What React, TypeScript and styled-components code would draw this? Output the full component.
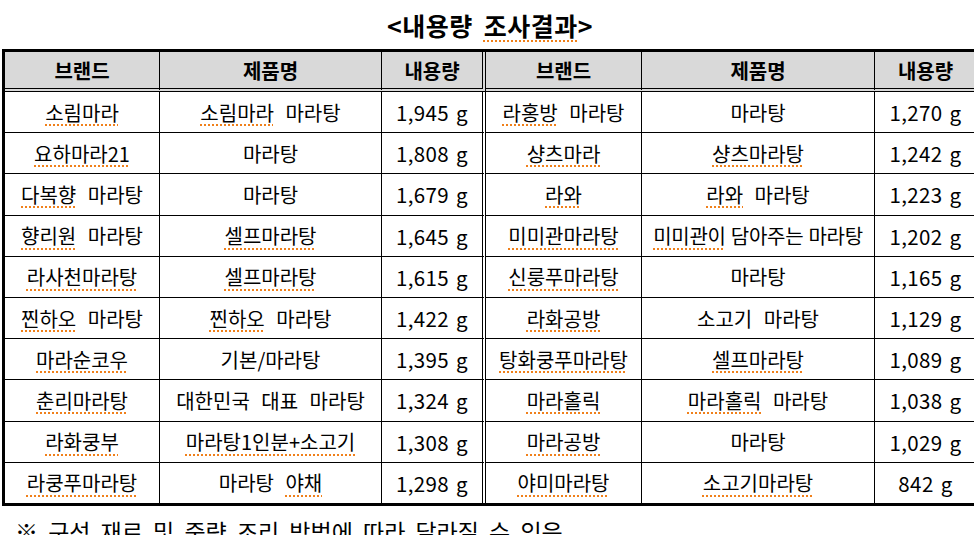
import React from 'react';
import styled, { createGlobalStyle } from 'styled-components';

const Global = createGlobalStyle`
  html, body { margin: 0; padding: 0; background: #fff; overflow: hidden; }
  body { font-family: "Noto Sans CJK KR", "Noto Sans", sans-serif; color: #000; }
`;

const Page = styled.div`
  width: 980px;
  height: 535px;
  overflow: hidden;
  padding-left: 2px;
  box-sizing: border-box;
`;

const Title = styled.h1`
  margin: 0;
  width: 976px;
  height: 49px;
  padding-top: 3px;
  box-sizing: border-box;
  text-align: center;
  font-size: 25px;
  line-height: 44px;
  font-weight: 700;
  letter-spacing: 0.5px;
  word-spacing: 5px;
  white-space: pre;
`;

const Table = styled.table`
  border-collapse: separate;
  border-spacing: 0;
  table-layout: fixed;
  width: 977px;
  border-top: 3px solid #000;
  border-bottom: 3px solid #000;
  border-left: 3px solid #000;
  border-right: 3px solid #000;
`;

const Th = styled.th<{ $split?: boolean }>`
  box-sizing: border-box;
  height: 40px;
  padding: 0;
  background: #d9d9d9;
  font-size: 20px;
  font-weight: 700;
  text-align: center;
  vertical-align: middle;
  border-bottom: 4px double #000;
  border-right: ${(p) => (p.$split ? '4px double #000' : '1px solid #000')};
  &:last-child { border-right: none; }
`;

const Td = styled.td<{ $split?: boolean; $last?: boolean; $tight?: boolean; $num?: boolean }>`
  box-sizing: border-box;
  height: ${(p) => (p.$last ? '40.2px' : '41.2px')};
  padding: 0;
  font-size: ${(p) => (p.$num ? '20.5px' : '20px')};
  font-weight: 400;
  text-align: center;
  vertical-align: middle;
  white-space: nowrap;
  word-spacing: ${(p) => (p.$num ? '2px' : p.$tight ? '1px' : '7px')};
  letter-spacing: ${(p) => (p.$num ? '0.4px' : p.$tight ? '-0.3px' : '0')};
  border-bottom: ${(p) => (p.$last ? 'none' : '1px solid #000')};
  border-right: ${(p) => (p.$split ? '4px double #000' : '1px solid #000')};
  &:last-child { border-right: none; }
`;

const Marked = styled.span`
  text-decoration-line: underline;
  text-decoration-style: dotted;
  text-decoration-color: #f0801a;
  text-decoration-thickness: 2px;
  text-underline-offset: 4px;
`;

const Note = styled.p`
  margin: 9px 0 0;
  padding-left: 13px;
  font-size: 23px;
  line-height: 32px;
  word-spacing: 5px;
  white-space: nowrap;
`;

const widths = [155, 222, 104, 156, 233, 101];
const headers = ['브랜드', '제품명', '내용량', '브랜드', '제품명', '내용량'];

const rows: string[][] = [
  ['~소림마라~', '~소림마라~ 마라탕', '1,945 g', '~라홍방~ 마라탕', '마라탕', '1,270 g'],
  ['~요하마라21~', '마라탕', '1,808 g', '~샹츠마라~', '~샹츠마라탕~', '1,242 g'],
  ['~다복향~ 마라탕', '마라탕', '1,679 g', '~라와~', '~라와~ 마라탕', '1,223 g'],
  ['~향리원~ 마라탕', '~셀프마라탕~', '1,645 g', '~미미관마라탕~', '~미미관이~ 담아주는 마라탕', '1,202 g'],
  ['~라사천마라탕~', '~셀프마라탕~', '1,615 g', '~신룽푸마라탕~', '마라탕', '1,165 g'],
  ['~찐하오~ 마라탕', '~찐하오~ 마라탕', '1,422 g', '~라화공방~', '소고기 마라탕', '1,129 g'],
  ['~마라순코우~', '기본/마라탕', '1,395 g', '~탕화쿵푸마라탕~', '~셀프마라탕~', '1,089 g'],
  ['~춘리마라탕~', '대한민국 대표 마라탕', '1,324 g', '~마라홀릭~', '~마라홀릭~ 마라탕', '1,038 g'],
  ['~라화쿵부~', '~마라탕1인분+소고기~', '1,308 g', '~마라공방~', '마라탕', '1,029 g'],
  ['~라쿵푸마라탕~', '마라탕 ~야채~', '1,298 g', '~야미마라탕~', '~소고기마라탕~', '842 g'],
];

function renderMarked(text: string) {
  return text.split('~').map((seg, i) =>
    i % 2 === 1 ? <Marked key={i}>{seg}</Marked> : <React.Fragment key={i}>{seg}</React.Fragment>
  );
}

export default function App() {
  return (
    <Page>
      <Global />
      <Title>{renderMarked('<내용량 ~조사결과~>')}</Title>
      <Table>
        <colgroup>
          {widths.map((w, i) => (
            <col key={i} style={{ width: w }} />
          ))}
        </colgroup>
        <thead>
          <tr>
            {headers.map((h, i) => (
              <Th key={i} $split={i === 2}>
                {h}
              </Th>
            ))}
          </tr>
        </thead>
        <tbody>
          {rows.map((r, ri) => (
            <tr key={ri}>
              {r.map((c, ci) => (
                <Td
                  key={ci}
                  $split={ci === 2}
                  $last={ri === rows.length - 1}
                  $tight={c.length > 14}
                  $num={ci === 2 || ci === 5}
                >
                  {renderMarked(c)}
                </Td>
              ))}
            </tr>
          ))}
        </tbody>
      </Table>
      <Note>※ 구성 재료 및 중량 조리 방법에 따라 달라질 수 있음</Note>
    </Page>
  );
}
